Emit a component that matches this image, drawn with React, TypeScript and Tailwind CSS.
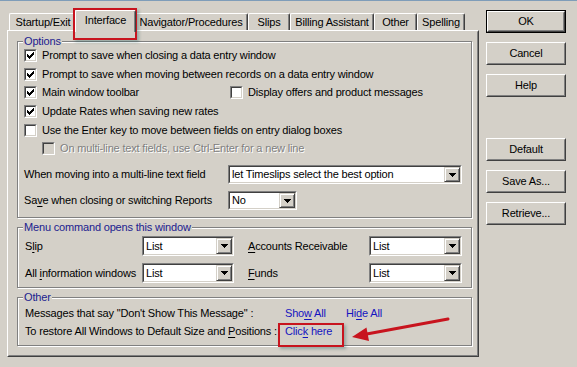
import React from 'react';

const Check = ({ checked = false, disabled = false }: { checked?: boolean; disabled?: boolean }) => (
  <span className="block w-[13px] h-[13px] shrink-0 border border-[#808080] border-r-white border-b-white">
    <span
      className={`block w-[11px] h-[11px] border border-[#404040] border-r-[#d4d0c8] border-b-[#d4d0c8] ${
        disabled ? 'bg-[#d4d0c8]' : 'bg-white'
      }`}
    >
      {checked && (
        <svg width="9" height="9" viewBox="0 0 9 9" shapeRendering="crispEdges" className="block">
          {[2, 3, 4, 3, 2, 1, 0].map((t, i) => (
            <rect key={i} x={1 + i} y={1 + t} width="1" height="3" fill="#000" />
          ))}
        </svg>
      )}
    </span>
  </span>
);

const Arrow = () => (
  <svg width="7" height="4" viewBox="0 0 7 4" shapeRendering="crispEdges" className="block">
    <rect x="0" y="0" width="7" height="1" fill="#000" />
    <rect x="1" y="1" width="5" height="1" fill="#000" />
    <rect x="2" y="2" width="3" height="1" fill="#000" />
    <rect x="3" y="3" width="1" height="1" fill="#000" />
  </svg>
);

const Combo = ({ text, className }: { text: string; className: string }) => (
  <div className={`flex shrink-0 border border-[#808080] border-r-white border-b-white ${className}`}>
    <div className="flex flex-1 min-w-0 border border-[#404040] border-r-[#d4d0c8] border-b-[#d4d0c8] bg-white">
      <span className="flex-1 pl-[2px] flex items-center whitespace-nowrap overflow-hidden">{text}</span>
      <span className="w-[16px] flex items-center justify-center bg-[#d4d0c8] border border-[#d4d0c8] border-r-[#404040] border-b-[#404040] shadow-[inset_1px_1px_0_#fff,inset_-1px_-1px_0_#808080]">
        <Arrow />
      </span>
    </div>
  </div>
);

const Btn = ({ label, def = false, className = '' }: { label: string; def?: boolean; className?: string }) => (
  <div className={`w-[80px] h-[23px] shrink-0 ${def ? 'border border-black' : ''} ${className}`}>
    <div className="w-full h-full border border-white border-r-[#404040] border-b-[#404040]">
      <div className="w-full h-full border border-[#d4d0c8] border-r-[#808080] border-b-[#808080] flex items-center justify-center">
        {label}
      </div>
    </div>
  </div>
);

const Group = ({ label, className, children }: { label: string; className: string; children: React.ReactNode }) => (
  <div className={`relative shrink-0 border border-[#808080] shadow-[inset_1px_1px_0_#fff,1px_1px_0_#fff] ${className}`}>
    <span className="absolute left-[5px] -top-[7px] px-[1px] bg-[#d4d0c8] text-[#20208f] leading-[13px] whitespace-nowrap">
      {label}
    </span>
    {children}
  </div>
);

const tabs = [
  { label: 'Startup/Exit', cls: 'w-[68px] h-[17px]', sel: false },
  { label: 'Interface', cls: 'w-[61px] h-[22px] -mx-[2px] -mb-[2px] z-10 pb-[3px]', sel: true },
  { label: 'Navigator/Procedures', cls: 'w-[114px] h-[17px]', sel: false },
  { label: 'Slips', cls: 'w-[42px] h-[17px]', sel: false },
  { label: 'Billing Assistant', cls: 'w-[84px] h-[17px]', sel: false },
  { label: 'Other', cls: 'w-[43px] h-[17px]', sel: false },
  { label: 'Spelling', cls: 'w-[48px] h-[17px]', sel: false },
];

const U = ({ children }: { children: React.ReactNode }) => <span className="underline underline-offset-[2px]">{children}</span>;

export default function App() {
  return (
    <div className="w-[577px] h-[367px] bg-[#d4d0c8] border-t border-[#7f9db9] flex relative overflow-hidden text-[11px] leading-[13px] tracking-[-0.17px] whitespace-nowrap text-black font-['Liberation_Sans',Arial,sans-serif]">
      {/* left: tabs + panel */}
      <div className="ml-[7px] w-[472px] pt-[9px] flex flex-col shrink-0">
        <div className="h-[20px] flex items-end pl-[2px]">
          {tabs.map((t) => (
            <div
              key={t.label}
              className={`relative shrink-0 flex items-center justify-center bg-[#d4d0c8] border-t border-l border-white border-r border-r-[#404040] rounded-t-[2px] shadow-[inset_-1px_0_0_#808080] whitespace-nowrap ${t.cls}`}
            >
              {t.label}
            </div>
          ))}
        </div>
        <div className="h-[327px] border border-white border-r-[#404040] border-b-[#404040]">
          <div className="h-full border border-[#d4d0c8] border-r-[#808080] border-b-[#808080] pl-[8px] pr-[5px] pt-[9px] flex flex-col">
            <Group label="Options" className="h-[177px] px-[6px] pt-[4px]">
              <div className="flex items-center gap-[5px] h-[19px]">
                <Check checked />
                <span>Prompt to save when closing a data entry window</span>
              </div>
              <div className="flex items-center gap-[5px] h-[18px]">
                <Check checked />
                <span>Prompt to save when moving between records on a data entry window</span>
              </div>
              <div className="flex items-center h-[19px]">
                <div className="w-[206px] flex items-center gap-[5px]">
                  <Check checked />
                  <span>Main window toolbar</span>
                </div>
                <div className="flex items-center gap-[5px]">
                  <Check />
                  <span>Display offers and product messages</span>
                </div>
              </div>
              <div className="flex items-center gap-[5px] h-[19px]">
                <Check checked />
                <span>Update Rates when saving new rates</span>
              </div>
              <div className="flex items-center gap-[5px] h-[18px]">
                <Check />
                <span>Use the Enter key to move between fields on entry dialog boxes</span>
              </div>
              <div className="flex items-center gap-[5px] h-[19px] pl-[18px]">
                <Check disabled />
                <span className="text-[#808080] [text-shadow:1px_1px_0_#fff]">
                  On multi-line text fields, use Ctrl-Enter for a new line
                </span>
              </div>
              <div className="flex items-center h-[19px] mt-[7px]">
                <span className="w-[204px] shrink-0">When moving into a multi-line text field</span>
                <Combo text="let Timeslips select the best option" className="w-[234px] h-[19px]" />
              </div>
              <div className="flex items-center h-[19px] mt-[7px]">
                <span className="w-[204px] shrink-0">
                  Sa<U>v</U>e when closing or switching Reports
                </span>
                <Combo text="No" className="w-[69px] h-[19px]" />
              </div>
            </Group>

            <Group label="Menu command opens this window" className="mt-[9px] h-[61px] pl-[7px] pt-[8px]">
              <div className="flex items-center h-[20px]">
                <span className="w-[117px] shrink-0">
                  S<U>l</U>ip
                </span>
                <Combo text="List" className="w-[92px] h-[20px]" />
                <span className="ml-[14px] w-[121px] shrink-0">
                  <U>A</U>ccounts Receivable
                </span>
                <Combo text="List" className="w-[93px] h-[20px]" />
              </div>
              <div className="flex items-center h-[20px] mt-[7px]">
                <span className="w-[117px] shrink-0">
                  All <U>i</U>nformation windows
                </span>
                <Combo text="List" className="w-[92px] h-[20px]" />
                <span className="ml-[14px] w-[121px] shrink-0">
                  <U>F</U>unds
                </span>
                <Combo text="List" className="w-[93px] h-[20px]" />
              </div>
            </Group>

            <Group label="Other" className="mt-[9px] h-[49px] pl-[7px] pt-[6px]">
              <div className="flex items-center h-[18px]">
                <span className="w-[260px] shrink-0">Messages that say "Don't Show This Message" :</span>
                <span className="w-[61px] shrink-0 text-[#1414c0]">
                  Sho<U>w</U> All
                </span>
                <span className="text-[#1414c0]">
                  Hi<U>d</U>e All
                </span>
              </div>
              <div className="flex items-center h-[19px]">
                <span className="w-[260px] shrink-0">
                  To restore All Windows to Default Size and <U>P</U>ositions :
                </span>
                <span className="text-[#1414c0]">
                  Clic<U>k</U> here
                </span>
              </div>
            </Group>
          </div>
        </div>
      </div>

      {/* right: buttons */}
      <div className="ml-[7px] w-[80px] pt-[9px] flex flex-col shrink-0">
        <Btn label="OK" def />
        <Btn label="Cancel" className="mt-[9px]" />
        <Btn label="Help" className="mt-[9px]" />
        <Btn label="Default" className="mt-[41px]" />
        <Btn label="Save As..." className="mt-[9px]" />
        <Btn label="Retrieve..." className="mt-[9px]" />
      </div>

      {/* annotations */}
      <div className="absolute left-[73px] top-[7px] w-[64px] h-[32px] border-2 border-[#c8141e] shadow-[2px_2px_3px_rgba(0,70,70,0.3)]" />
      <div className="absolute left-[278px] top-[322px] w-[66px] h-[24px] border-2 border-[#c8141e] shadow-[2px_2px_3px_rgba(0,70,70,0.3)]" />
      <svg className="absolute left-0 top-0 pointer-events-none" width="577" height="367" viewBox="0 0 577 367">
        <line x1="448" y1="318" x2="364" y2="333.5" stroke="#c8141e" strokeWidth="3" strokeLinecap="round" />
        <polygon points="352,336 369,340 366.5,326.5" fill="#c8141e" />
      </svg>
    </div>
  );
}
